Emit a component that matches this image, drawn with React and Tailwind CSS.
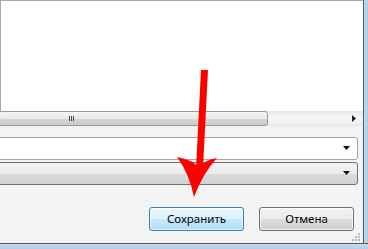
import React from "react";

function Caret() {
  return (
    <svg width="8" height="5" viewBox="0 0 8 5" className="shrink-0">
      <path d="M0 0 H7 L3.5 4 Z" fill="#111" />
    </svg>
  );
}

function ResizeGrip() {
  const dots = [
    [7, 1],
    [4, 4], [7, 4],
    [1, 7], [4, 7], [7, 7],
  ];
  return (
    <svg width="10" height="10" viewBox="0 0 10 10">
      {dots.map(([x, y], i) => (
        <rect key={i} x={x} y={y} width="2" height="2" fill="#b8b8b8" />
      ))}
    </svg>
  );
}

export default function App() {
  return (
    <div className="relative w-[368px] h-[249px] overflow-hidden bg-[#f3f3f3] font-['Noto_Sans',sans-serif] text-[11.5px] text-black">
      <div className="flex flex-col h-full">
        <div className="flex flex-1 min-h-0">
          {/* dialog body */}
          <div className="flex-1 flex flex-col">
            {/* list */}
            <div className="h-[111px] bg-white border-t border-l border-[#a9a9a9]" />

            {/* horizontal scrollbar */}
            <div className="h-[15px] flex items-center bg-[linear-gradient(to_bottom,#e6e6e6,#f4f4f4_30%,#f4f4f4_70%,#e8e8e8)]">
              <div className="w-[270px] -ml-[2px] h-[15px] rounded-[3px] border border-[#9a9a9a] bg-[linear-gradient(to_bottom,#f6f6f6,#e9e9e9_50%,#d6d6d6_51%,#cbcbcb)] flex items-center pl-[70px] gap-[1px]">
                <span className="w-[1px] h-[5px] bg-[#444]" />
                <span className="w-[1px] h-[5px] bg-[#444]" />
                <span className="w-[1px] h-[5px] bg-[#444]" />
              </div>
              <div className="flex-1" />
              <svg width="4" height="7" viewBox="0 0 4 7" className="mr-[7px]">
                <path d="M0 0 L4 3.5 L0 7 Z" fill="#222" />
              </svg>
            </div>

            {/* combos */}
            <div className="flex flex-col gap-[2px] mt-[11px] pr-[5px]">
              <div className="h-[23px] -ml-[3px] bg-white border border-[#a5a5a5] rounded-[3px] flex items-center justify-end pr-[6px]">
                <Caret />
              </div>
              <div className="h-[23px] -ml-[3px] border border-[#707070] rounded-[3px] bg-[linear-gradient(to_bottom,#f4f4f4,#ececec_50%,#dcdcdc_51%,#d1d1d1)] flex items-center justify-end pr-[6px]">
                <Caret />
              </div>
            </div>

            {/* buttons */}
            <div className="flex justify-end gap-[15px] mt-[22px] pr-[9px]">
              <button className="w-[95px] h-[24px] rounded-[3px] border border-[#3c7fb1] bg-[linear-gradient(to_bottom,#eaf6fd,#dcf1fc_50%,#c6e9fc_51%,#b2ddf5)] shadow-[inset_0_0_0_1px_rgba(255,255,255,0.6)] flex items-center justify-center">
                Сохранить
              </button>
              <button className="w-[95px] h-[24px] rounded-[3px] border border-[#707070] bg-[linear-gradient(to_bottom,#f2f2f2,#ebebeb_50%,#dddddd_51%,#cfcfcf)] shadow-[inset_0_0_0_1px_rgba(255,255,255,0.7)] flex items-center justify-center">
                Отмена
              </button>
            </div>

            <div className="flex-1 flex items-end justify-end pr-[2px] pb-[1px]">
              <ResizeGrip />
            </div>
          </div>

          {/* right window frame */}
          <div className="w-[1px] bg-[#4d5a68]" />
          <div className="w-[4px] bg-[linear-gradient(to_right,#c4d8ee,#b3cbe6)]" />
        </div>

        {/* bottom window frame */}
        <div className="h-[1px] bg-[#4d5a68]" />
        <div className="h-[5px] bg-[linear-gradient(to_bottom,#c9dcf0,#b6cde8)]" />
      </div>

      {/* red pointer arrow */}
      <svg
        className="absolute inset-0 pointer-events-none"
        width="368"
        height="249"
        viewBox="0 0 368 249"
      >
        <polygon points="201,70 208,70 203,168 196,168" fill="#ff0000" />
        <path
          d="M177 157 Q190 159 199 167 Q207 159 217 158 Q203 173 194 197 Q189 173 177 157 Z"
          fill="#ff0000"
        />
      </svg>
    </div>
  );
}
